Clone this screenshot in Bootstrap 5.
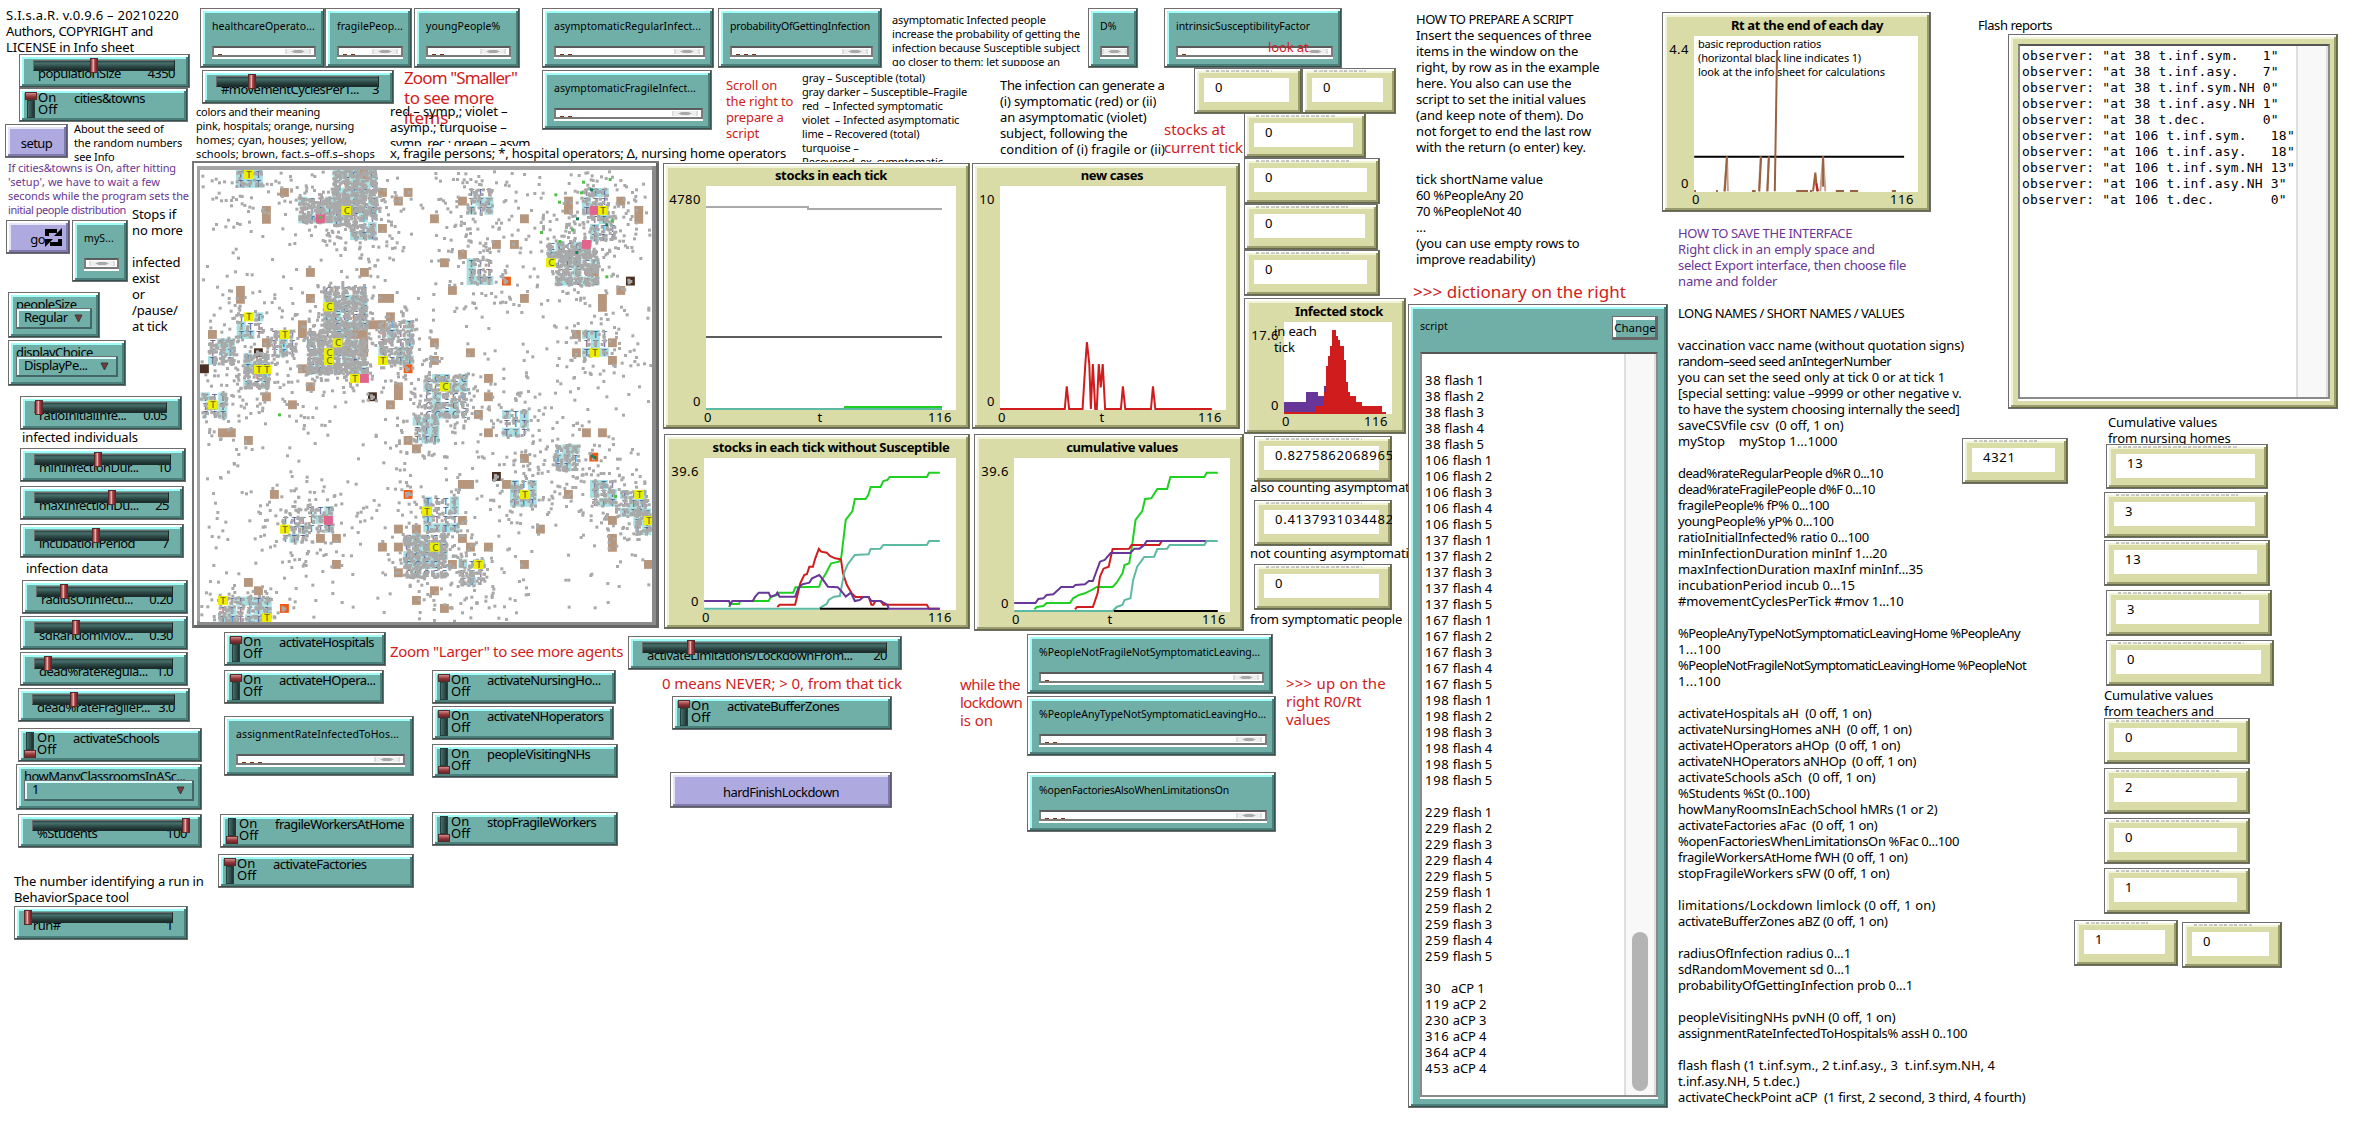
<!DOCTYPE html>
<html lang="en">
<head>
<meta charset="utf-8">
<title>S.I.s.a.R. model interface</title>
<link rel="stylesheet" href="https://cdn.jsdelivr.net/npm/bootstrap@5.3.0/dist/css/bootstrap.min.css">
<style>
  :root { --edge:#6e6e6e; --hi:#9ffcf8; --face:#70afa8; --mid:#4b7f7a; --low:#34524f; }
  body { font-family:"Noto Sans","Liberation Sans",sans-serif; color:#000; background:#fff; }
  #board { width:2354px; height:1122px; }
  .note { white-space:pre; }
  .ink-red { color:#d01c1c; } .ink-violet { color:#6a3695; }
  .f11 { font-size:11px; line-height:14px; letter-spacing:var(--ls11); }
  .f13 { font-size:13px; line-height:16px; letter-spacing:var(--ls13); }
  .f14 { font-size:15px; line-height:18px; letter-spacing:var(--ls14); }
  .f16 { font-size:17px; line-height:20px; letter-spacing:var(--ls16); }
  .wdg { background:var(--face); white-space:nowrap; overflow:hidden;
    box-shadow: inset 1px 1px var(--edge), inset -1px -1px var(--edge), inset -2px -2px var(--low), inset 3px 3px #fff, inset -4px -4px var(--mid), inset 5px 5px var(--hi); }
  .khaki { --face:#d9dca6; --hi:#f1f3d6; --mid:#9a9c70; --low:#66683f; }
  .lilac { --face:#aeaae0; --hi:#e6e4fb; --mid:#7f7ba8; --low:#5a5778; }
  .cap { font-size:13px; line-height:16px; letter-spacing:var(--lsw); }
  .num { letter-spacing:.75px; }
  /* slider */
  .groove { height:11px; margin:6px 15px 0 14px; z-index:1;
    background:linear-gradient(#2b4442,#46706c 25%,#2d4a47 60%,#1a2b2a); border:1px solid; border-color:#6c6c6c #1b2b2a #1b2b2a #6c6c6c; }
  .thumb { width:8px; height:15px; top:-3px; background:linear-gradient(90deg,#8f3437,#f3b5b5 45%,#a8454a 60%,#6d2326); border:1px solid #5a2a2b; }
  .slide-row { margin:-6px 15px 0 19px; }
  /* switch */
  .stem { width:8px; height:18px; background:linear-gradient(90deg,#46706c,#1d3130); border:1px solid #24403d; margin-left:2px; }
  .knob { width:12px; height:8px; background:linear-gradient(#d48b8b,#96393d 55%,#6b2528); border:1px solid #5b2c2d; flex:none; }
  .lever { width:12px; margin:4px 1px 0 6px; }
  .onoff { line-height:12px; margin-top:3px; width:36px; font-size:13px; }
  .sw-name { padding-top:2px; }
  /* input */
  .in-cap { font-size:10.5px; line-height:14px; letter-spacing:var(--ls10); margin:11px 8px 0 12px; }
  .in-box { height:11px; margin:13px 9px 0 12px; background:#fff; border:2px solid #7b7b7b; border-top-color:#5b5b5b; box-shadow:0 2px #fff; }
  .tickmark { width:4px; height:1px; background:#7d3413; margin-left:4px; }
  .pill { width:26px; height:5px; background:radial-gradient(ellipse at center,#a9a9a9 35%,#eee 45%); border:solid #ddd; border-width:0 2px; margin-right:3px; align-self:center; }
  /* monitor */
  .mon-cap { height:2px; margin:2px 30px 0 12px; background:repeating-linear-gradient(90deg,#aaa 0 3px,transparent 3px 5px,#bbb 5px 9px,transparent 9px 10px); opacity:.7; }
  .mon-box { height:24px; margin:6px 13px 0 10px; background:#fff; padding:1px 0 0 11px; }
  /* chooser */
  .drop { height:21px; margin:-4px 8px 0 8px; padding:0 9px 0 8px; background:var(--face);
    box-shadow: inset 1px 1px var(--edge), inset -2px -2px #466, inset 3px 3px #d9fbf9; z-index:1; }
  .drop .cap { line-height:17px; padding-bottom:3px; }
  .well { background:#fff; border:2px solid #8a8a8a; border-top-color:#555; box-shadow:0 2px #fff; }
  .rail { width:32px; background:#f8f8f8; border:solid #dedede; border-width:0 2px; }
  .grip { width:16px; height:159px; background:#b4b4b4; border-radius:8px; }
  .win-cap { margin-top:15px; }
  .script-well { margin:12px 10px 0 12px; height:745px; }
  .script-text { padding:18px 0 0 3px; }
  .log-well { margin:10px 8px 0 10px; height:355px; }
  .log-text { padding:2px 0 0 2px; }
  .chg { width:46px; height:24px; font-size:11.5px; line-height:24px; margin:12px 10px 0 0; background:var(--face);
    box-shadow: inset 1px 1px var(--edge), inset -3px -3px #666, inset 4px 4px #fff; }
  .logfont { font-family:"DejaVu Sans Mono","Liberation Mono",monospace; font-size:13px; line-height:16px; letter-spacing:.2px; white-space:pre; }
  .frame { background:#a4a4a4; box-shadow: inset 2px 2px #777, inset -3px -3px #666, inset 5px 5px #fff, inset -7px -7px #8b8b8b; }
  svg text { font-size:13px; letter-spacing:.5px; }
  svg .ttl { font-size:13px; font-weight:700; letter-spacing:var(--lsb); text-anchor:middle; }
  svg .tile-l { font-size:29px; fill:#4a6190; letter-spacing:0; font-weight:500; }
  svg polyline { fill:none; stroke-width:2px; vector-effect:non-scaling-stroke; }
</style>
</head>
<body>
<main id="board" class="position-relative overflow-hidden"></main>
<script src="https://cdn.jsdelivr.net/npm/bootstrap@5.3.0/dist/js/bootstrap.bundle.min.js"></script>
<script>
const board = document.getElementById('board');
const esc = s => String(s).replace(/&/g,'&amp;').replace(/</g,'&lt;').replace(/>/g,'&gt;');

/* tracking of each text size, from the width one known phrase should take */
const pen = document.createElement('canvas').getContext('2d');
function spacing(font, phrase, width) {
  pen.font = font + ' "Noto Sans"';
  return ((width - pen.measureText(phrase).width) / phrase.length).toFixed(3) + 'px';
}
const track = (name, font, phrase, width) => document.documentElement.style.setProperty(name, spacing(font, phrase, width));
track('--ls11', '11px', 'infection because Susceptible subject', 188);
track('--ls13', '13px', 'right, by row as in the example', 183.5);
track('--ls14', '15px', '0 means NEVER; > 0, from that tick', 240);
track('--ls16', '17px', '>>> dictionary on the right', 213);
track('--lsw', '13px', 'activateHospitals', 95);
track('--ls10', '10.5px', 'asymptomaticRegularInfect...', 147);
track('--lsb', '700 13px', 'stocks in each tick without Susceptible', 237);

/* every widget is placed on the board by x1, y1, x2, y2 */
function put(cls, x1, y1, x2, y2, html) {
  board.insertAdjacentHTML('beforeend',
    `<div class="position-absolute ${cls}" style="left:${x1}px;top:${y1}px;width:${x2-x1}px;height:${y2-y1}px">${html}</div>`);
}
const rise = {11:11, 13:13, 14:14, 16:16}, pitch = {11:14, 13:16, 14:18, 16:20}, px = {11:11, 13:13, 14:15, 16:17};
/* fits: {line number: width} for lines with a tracking of their own */
function note(x, base, size, text, ink = '', clipX, clipY, fits = {}) {
  const top = base - rise[size], rows = text.split('\n');
  const html = rows.map((r,i) => fits[i] ? `<span style="letter-spacing:${spacing(px[size]+'px', r, fits[i])}">${esc(r)}</span>` : esc(r)).join('\n');
  put(`note f${size} ${ink} ${clipX || clipY ? 'overflow-hidden' : ''}`, x, top, clipX || x + 500, clipY || top + rows.length * pitch[size], html);
}
const slider = (x1,y1,x2,y2,name,val,knob) => put('wdg', x1,y1,x2,y2,
  `<div class="groove position-relative"><div class="thumb position-absolute" style="left:${knob-x1-15}px"></div></div>
   <div class="slide-row cap d-flex justify-content-between"><span>${name}</span><span>${val}</span></div>`);
const toggle = (x1,y1,x2,y2,name,on) => put('wdg d-flex align-items-start', x1,y1,x2,y2,
  `<div class="lever d-flex flex-column">${on ? '<div class="knob"></div><div class="stem"></div>' : '<div class="stem"></div><div class="knob"></div>'}</div>
   <div class="onoff">On<br>Off</div><div class="cap sw-name">${name}</div>`);
const input = (x1,y1,x2,y2,name,n,fit) => put('wdg', x1,y1,x2,y2,
  `<div class="in-cap"${fit ? ` style="letter-spacing:${spacing('10.5px', name, fit)}"` : ''}>${name}</div><div class="in-box d-flex align-items-end">${'<i class="tickmark"></i>'.repeat(n)}<i class="pill ${x2-x1<60?'m-auto':'ms-auto'}"></i></div>`);
const monitor = (x1,y1,x2,y2,val) => put('wdg khaki', x1,y1,x2,y2,
  `<div class="mon-cap"></div><div class="mon-box cap num">${val}</div>`);
const chooser = (x1,y1,x2,y2,name,val) => put('wdg', x1,y1,x2,y2,
  `<div class="cap ps-2 pt-1">${name}</div><div class="drop position-relative d-flex justify-content-between align-items-center"><span class="cap">${val}</span>
   <svg width="9" height="9" viewBox="0 0 9 9"><path d="M1 1H8L4.5 8Z" fill="#7d3a3c" stroke="#2f3b3a"/></svg></div>`);

/* left column */
note(6,19.5,13,'S.I.s.a.R. v.0.9.6 – 20210220\nAuthors, COPYRIGHT and\nLICENSE in Info sheet','',0,0,{0:173,1:147});
slider(19,54,190,88,'populationSize','4350',90);
toggle(19,88,188,122,'cities&amp;towns',1);
put('wdg lilac cap d-flex align-items-center justify-content-center pt-1',5,124,68,158,'setup');
note(74,133,11,'About the seed of\nthe random numbers\nsee Info');
note(8,172,11,"If cities&towns is On, after hitting\n'setup', we have to wait a few\nseconds while the program sets the\ninitial people distribution",'ink-violet',0,0,{0:168,1:152,2:181,3:118});
put('wdg lilac cap d-flex align-items-center justify-content-end',6,220,70,254,
  `<span class="pt-1">go</span><svg class="me-2" width="17" height="19" viewBox="0 0 17 19"><g fill="none" stroke="#000" stroke-width="4"><path d="M2 8V3H12"/><path d="M15 11V16H5"/></g><path d="M9 8H17V0ZM8 11H0V19Z"/></svg>`);
put('wdg',72,220,128,282,'<div class="in-cap">myS...</div><div class="in-box d-flex"><i class="pill m-auto"></i></div>');
note(132,219,13,'Stops if\nno more\n\ninfected\nexist\nor\n/pause/\nat tick');
note(150,347,13,'⌢','',158,341);
chooser(8,292,100,338,'peopleSize','Regular');
chooser(8,340,126,386,'displayChoice','DisplayPe...');
slider(20,396,182,430,'ratioInitialInfe...','0.05',35);
note(22,441.5,13,'infected individuals');
slider(20,448,186,482,'minInfectionDur...','10',94);
slider(20,486,184,520,'maxInfectionDu...','25',108);
slider(20,524,184,558,'incubationPeriod','7',92);
note(26,573,13,'infection data');
slider(22,580,188,614,'radiusOfInfecti...','0.20',60);
slider(20,616,188,650,'sdRandomMov...','0.30',72);
slider(20,652,188,686,'dead%rateRegula...','1.0',44);
slider(18,688,190,722,'dead%rateFragileP...','3.0',70);
toggle(18,728,202,762,'activateSchools',0);
chooser(16,764,202,810,'howManyClassroomsInASc...','1');
slider(18,814,202,848,'%Students','100',182);
note(14,886,13,'The number identifying a run in\nBehaviorSpace tool');
slider(14,906,188,940,'run#','1',24);

/* upper inputs and notes */
input(200,8,325,68,'healthcareOperato...',1);
input(325,8,412,68,'fragilePeop...',2);
input(414,8,520,68,'youngPeople%',2);
slider(202,70,394,104,'#movementCyclesPerT...','3',248);
note(404,84,16,'Zoom "Smaller"\nto see more\nitems','ink-red',0,0,{0:113,1:90});
note(196,116,11,'colors and their meaning\npink, hospitals; orange, nursing\nhomes; cyan, houses; yellow,\nschools; brown, fact.s–off.s–shops','',0,0,{0:124,1:158,2:151,3:179});
note(390,116,13,'red – symp,; violet –\nasymp.; turquoise –\nsymp. rec.; green – asym.','',536,146,{2:143});
note(390,158,13,'x, fragile persons; *, hospital operators; ∆, nursing home operators','',0,0,{0:396});
input(542,8,714,68,'asymptomaticRegularInfect...',2);
input(718,8,882,68,'probabilityOfGettingInfection',3,140);
input(542,70,712,130,'asymptomaticFragileInfect...',2);
note(892,24,11,'asymptomatic Infected people\nincrease the probability of getting the\ninfection because Susceptible subject\ngo closer to them: let suppose an','',1086,66,{1:188});
note(726,90,13,'Scroll on\nthe right to\nprepare a\nscript','ink-red');
note(802,82,11,'gray – Susceptible (total)\ngray darker – Susceptible–Fragile\nred  – Infected symptomatic\nviolet  – Infected asymptomatic\nlime – Recovered (total)\nturquoise –\nRecovered–ex–symptomatic','',990,162,{1:165});
note(1000,90,13,'The infection can generate a\n(i) symptomatic (red) or (ii)\nan asymptomatic (violet)\nsubject, following the\ncondition of (i) fragile or (ii)','',0,0,{0:164.5,4:165});
input(1088,8,1138,68,'D%',0);
input(1164,8,1342,68,'intrinsicSusceptibilityFactor',1,134);
note(1268,52,13,'look at','ink-red');
monitor(1194,68,1302,114,0); monitor(1302,68,1396,114,0);
monitor(1244,113,1366,158,0); monitor(1244,158,1380,204,0);
monitor(1244,204,1378,250,0); monitor(1244,250,1380,296,0);
note(1164,134,14,'stocks at\ncurrent tick','ink-red',0,0,{1:79});
note(1416,24,13,'HOW TO PREPARE A SCRIPT\nInsert the sequences of three\nitems in the window on the\nright, by row as in the example\nhere. You also can use the\nscript to set the initial values\n(and keep note of them). Do\nnot forget to end the last row\nwith the return (o enter) key.\n\ntick shortName value\n60 %PeopleAny 20\n70 %PeopleNot 40\n...\n(you can use empty rows to\nimprove readability)','',0,0,{0:157,11:107,12:105});
note(1413,298,16,'>>> dictionary on the right','ink-red');

/* lower centre */
toggle(224,632,386,666,'activateHospitals',1);
toggle(224,670,384,704,'activateHOpera...',1);
input(224,716,414,776,'assignmentRateInfectedToHos...',3,163);
toggle(220,814,414,848,'fragileWorkersAtHome',0);
toggle(218,854,414,888,'activateFactories',1);
toggle(432,670,616,704,'activateNursingHo...',1);
toggle(432,706,614,740,'activateNHoperators',1);
toggle(432,744,618,778,'peopleVisitingNHs',0);
toggle(432,812,618,846,'stopFragileWorkers',0);
note(390,656,14,'Zoom "Larger" to see more agents','ink-red',0,0,{0:233});
slider(628,636,902,670,'activateLimitations/LockdownFrom...','20',687);
note(662,688,14,'0 means NEVER; > 0, from that tick','ink-red');
toggle(672,696,892,730,'activateBufferZones',1);
put('wdg lilac cap d-flex align-items-center justify-content-center pt-1',670,772,892,808,'hardFinishLockdown');
note(960,689,14,'while the\nlockdown\nis on','ink-red',0,0,{0:60,1:62});
input(1027,634,1273,694,'%PeopleNotFragileNotSymptomaticLeaving...',1,221);
input(1027,696,1276,756,'%PeopleAnyTypeNotSymptomaticLeavingHo...',2,227);
input(1027,772,1276,832,'%openFactoriesAlsoWhenLimitationsOn',3,190);
note(1286,688,14,'>>> up on the\nright R0/Rt\nvalues','ink-red',0,0,{0:100});
monitor(1254,436,1392,482,'0.82758620689655');
note(1250,492,13,'also counting asymptomatic','',1408,500);
monitor(1254,500,1392,546,'0.41379310344827');
note(1250,558,13,'not counting asymptomatic','',1408,564);
monitor(1254,564,1392,610,0);
note(1250,624,13,'from symptomatic people','',0,0,{0:152});

/* plots: window box, plotting area, labels [x,y,text,anchor], curves */
function plot(x1,y1,x2,y2, area, title, labels, inner) {
  put('wdg khaki',x1,y1,x2,y2,
   `<svg class="d-block" width="${x2-x1}" height="${y2-y1}" viewBox="${x1} ${y1} ${x2-x1} ${y2-y1}">
     <text class="ttl" x="${title[0]}" y="${title[1]}">${title[2]}</text>
     <rect x="${area[0]}" y="${area[1]}" width="${area[2]-area[0]}" height="${area[3]-area[1]}" fill="#fff"/>
     ${inner}${labels.map(l=>`<text x="${l[0]}" y="${l[1]}" text-anchor="${l[3]||'middle'}">${l[2]}</text>`).join('')}</svg>`);
}
const line = (c, pts) => `<polyline stroke="${c}" points="${pts}"/>`;
const G='#1fd022', R='#d01c1c', V='#683698', A='#5dbaa2';
const mid = s => `<g transform="translate(650 150) scale(.3954 .33333)">${s}</g>`;
plot(663,163,970,429,[706,186,956,410],[831,180,'stocks in each tick'],
 [[701,204,'4780','end'],[701,406,'0','end'],[708,422,'0'],[820,422,'t'],[940,422,'116']],
 line('#aaa','706,207 808,207 808,209 942,209')+line('#5c5c5c','706,337 942,337')+line(A,'706,409 942,409')+line(G,'844,407 942,407'));
plot(972,163,1240,429,[1000,186,1226,410],[1112,180,'new cases'],
 [[995,204,'10','end'],[995,406,'0','end'],[1002,422,'0'],[1102,422,'t'],[1210,422,'116']],
 mid(line(R,'885,777 1049,777 1054,709 1060,777 1094,777 1101,642 1105,576 1111,642 1115,777 1120,642 1126,777 1130,777 1135,642 1140,712 1145,642 1151,777 1191,777 1196,709 1202,777 1267,777 1272,709 1278,777 1421,777')));
plot(664,434,970,629,[704,458,956,610],[831,452,'stocks in each tick without Susceptible'],
 [[699,476,'39.6','end'],[699,606,'0','end'],[706,622,'0'],[940,622,'116']],
 mid(line(G,'200,1371 203,1362 225,1362 228,1353 300,1353 305,1341 322,1335 326,1328 362,1328 368,1312 428,1310 432,1295 445,1270 458,1240 478,1235 484,1220 495,1110 512,1083 518,1047 545,1047 552,1035 558,1011 583,1011 590,993 600,990 606,981 700,981 706,968 733,968')
 +line(R,'322,1371 328,1364 367,1364 372,1340 380,1300 390,1275 397,1272 403,1250 412,1250 418,1225 427,1197 433,1205 447,1208 455,1218 468,1225 483,1228 488,1270 498,1305 510,1330 520,1341 553,1341 560,1364 565,1364 570,1353 583,1353 590,1364 700,1364 706,1376 733,1376')
 +line(A,'137,1376 428,1376 435,1370 447,1362 452,1350 465,1340 480,1338 486,1300 492,1265 500,1243 518,1215 553,1213 558,1197 583,1196 590,1185 700,1185 706,1173 733,1173')
 +line('#000','430,1376 604,1376')
 +line(V,'137,1353 200,1353 203,1364 208,1353 260,1353 266,1340 275,1328 300,1328 305,1340 318,1335 322,1328 328,1340 367,1340 375,1315 385,1303 403,1298 410,1285 428,1275 435,1285 450,1310 475,1312 485,1325 495,1340 508,1328 518,1353 530,1350 540,1341 553,1341 560,1353 583,1353 600,1364 604,1376 733,1376')));
plot(974,434,1244,631,[1014,458,1230,612],[1122,452,'cumulative values'],
 [[1009,476,'39.6','end'],[1009,608,'0','end'],[1016,624,'0'],[1110,624,'t'],[1214,624,'116']],
 mid(line(G,'972,1378 978,1371 995,1368 1003,1359 1062,1359 1070,1345 1085,1335 1100,1330 1120,1318 1130,1311 1170,1311 1180,1298 1195,1270 1200,1245 1212,1240 1220,1180 1228,1110 1245,1083 1252,1047 1268,1045 1283,1017 1308,1017 1316,981 1402,981 1408,968 1436,968')
 +line(R,'1075,1378 1080,1371 1120,1371 1132,1330 1138,1280 1147,1256 1160,1250 1170,1197 1212,1196 1218,1185 1288,1185 1295,1173 1405,1173')
 +line(A,'921,1383 1170,1383 1180,1371 1195,1365 1200,1350 1215,1345 1222,1290 1232,1250 1250,1221 1275,1220 1283,1197 1308,1196 1314,1185 1402,1185 1408,1173 1436,1173')
 +line('#000','1173,1383 1436,1383')
 +line(V,'921,1359 975,1359 982,1347 995,1345 1003,1335 1020,1333 1040,1311 1070,1311 1076,1305 1100,1303 1110,1293 1120,1293 1138,1235 1150,1230 1165,1209 1215,1209 1225,1196 1238,1196 1250,1185 1256,1173 1405,1173')));
plot(1244,298,1406,434,[1284,322,1392,414],[1339,316,'Infected stock'],
 [[1279,340,'17.6','end'],[1279,410,'0','end'],[1286,426,'0'],[1376,426,'116']],
 `<g transform="translate(1230 270) scale(.33333)"><path fill="${V}" d="M162 432V396H228V366H264V378H282V348H292V432Z"/><path fill="${R}" d="M162 432V426H258V408H282V366H288V288H294V258H300V228H306V180H318V198H324V210H330V228H342V270H348V336H354V366H360V378H378V396H396V408H456V426H468V432Z"/></g>`);
note(1274,336,13,'in each\ntick');
const B='#9a6240';
plot(1662,12,1931,212,[1694,36,1918,192],[1807,30,'Rt at the end of each day'],
 [[1689,54,'4.4','end'],[1689,188,'0','end'],[1696,204,'0'],[1902,204,'116']],'');
note(1698,48,11,'basic reproduction ratios\n(horizontal black line indicates 1)\nlook at the info sheet for calculations','',0,0,{0:123,1:163,2:187});
put('',1662,12,1931,212,`<svg class="d-block" width="269" height="200" viewBox="1662 12 269 200"><g transform="translate(1640 0) scale(.4554 .33333)">`
 +line('#000','119,470 580,470')
 +line('#c4a28e','185,574 191,470 193,574')+line('#c4a28e','261,574 265,470')+line('#c4a28e','279,574 283,470')+line('#c4a28e','396,574 402,470 407,574')
 +line(B,'191,470 186,574')+line(B,'266,470 262,574')+line(B,'283,470 280,574')+line(B,'296,574 301,150')+line(B,'402,470 402,560')
 +line(B,'380,574 385,518 389,574')+line(R,'387,550 391,574')
 +[[119,123],[167,171],[246,254],[343,369],[373,378],[430,448],[461,479],[553,562]].map(s=>line(B,`${s[0]},573 ${s[1]},573`)).join('')+'</g></svg>');

/* script input window */
const seq = (t,k=5) => Array.from({length:k},(_,i)=>`${t} flash ${Math.min(i+1,5)}`).join('\n');
put('wdg d-flex flex-column',1408,304,1668,1108,
 `<div class="d-flex justify-content-between"><span class="in-cap win-cap">script</span><span class="chg text-center">Change</span></div>
  <div class="well script-well d-flex justify-content-between overflow-hidden">
   <div class="note f13 script-text">${[seq(38),seq(106),seq(137),seq(167),seq(198,6),'',seq(229),seq(259),'','30   aCP 1','119 aCP 2','230 aCP 3','316 aCP 4','364 aCP 4','453 aCP 4'].join('\n').replace(/(\d\d\d?)( flash| aCP|   aCP)/g,'<span class="num">$1</span>$2')}</div>
   <div class="rail d-flex align-items-end justify-content-center pb-1"><div class="grip"></div></div></div>`);

/* right side */
note(1678,238,13,'HOW TO SAVE THE INTERFACE\nRight click in an emply space and\nselect Export interface, then choose file\nname and folder','ink-violet',0,0,{0:174,2:228});
note(1678,318,13,`LONG NAMES / SHORT NAMES / VALUES

vaccination vacc name (without quotation signs)
random–seed seed anIntegerNumber
you can set the seed only at tick 0 or at tick 1
[special setting: value –9999 or other negative v.
to have the system choosing internally the seed]
saveCSVfile csv  (0 off, 1 on)
myStop    myStop 1...1000

dead%rateRegularPeople d%R 0...10
dead%rateFragilePeople d%F 0...10
fragilePeople% fP% 0...100
youngPeople% yP% 0...100
ratioInitialInfected% ratio 0...100
minInfectionDuration minInf 1...20
maxInfectionDuration maxInf minInf...35
incubationPeriod incub 0...15
#movementCyclesPerTick #mov 1...10

%PeopleAnyTypeNotSymptomaticLeavingHome %PeopleAny
1...100
%PeopleNotFragileNotSymptomaticLeavingHome %PeopleNot
1...100

activateHospitals aH  (0 off, 1 on)
activateNursingHomes aNH  (0 off, 1 on)
activateHOperators aHOp  (0 off, 1 on)
activateNHOperators aNHOp  (0 off, 1 on)
activateSchools aSch  (0 off, 1 on)
%Students %St (0..100)
howManyRoomsInEachSchool hMRs (1 or 2)
activateFactories aFac  (0 off, 1 on)
%openFactoriesWhenLimitationsOn %Fac 0...100
fragileWorkersAtHome fWH (0 off, 1 on)
stopFragileWorkers sFW (0 off, 1 on)

limitations/Lockdown limlock (0 off, 1 on)
activateBufferZones aBZ (0 off, 1 on)

radiusOfInfection radius 0...1
sdRandomMovement sd 0...1
probabilityOfGettingInfection prob 0...1

peopleVisitingNHs pvNH (0 off, 1 on)
assignmentRateInfectedToHospitals% assH 0..100

flash flash (1 t.inf.sym., 2 t.inf.asy., 3  t.inf.sym.NH, 4
t.inf.asy.NH, 5 t.dec.)
activateCheckPoint aCP  (1 first, 2 second, 3 third, 4 fourth)`,'',0,0,
 {0:226,2:286,3:213,4:267,5:283.5,6:281.5,7:165.5,8:159.5,10:205,11:197,12:151,13:155.5,14:191,15:209,16:245,17:177,18:225.5,
  20:342,21:43,22:348,23:43,25:193.5,26:233.6,27:222,28:238,29:197.5,30:131.5,31:259.5,32:199.5,33:281,34:229.5,35:211.5,
  37:257.5,38:209.5,40:173,41:173,42:235,44:217.5,45:289,47:317,48:121.5,49:347.5});
note(1978,30,13,'Flash reports','',0,0,{0:74});
put('wdg khaki',2008,34,2338,409,
 `<div class="well log-well d-flex justify-content-between overflow-hidden">
   <div class="logfont log-text">observer: "at 38 t.inf.sym.   1"
observer: "at 38 t.inf.asy.   7"
observer: "at 38 t.inf.sym.NH 0"
observer: "at 38 t.inf.asy.NH 1"
observer: "at 38 t.dec.       0"
observer: "at 106 t.inf.sym.   18"
observer: "at 106 t.inf.asy.   18"
observer: "at 106 t.inf.sym.NH 13"
observer: "at 106 t.inf.asy.NH 3"
observer: "at 106 t.dec.       0"</div><div class="rail flex-shrink-0"></div></div>`);
monitor(1962,438,2068,484,4321);
note(2108,427,13,'Cumulative values\nfrom nursing homes','',2300,444);
monitor(2106,444,2268,489,13); monitor(2104,492,2268,538,3); monitor(2104,540,2270,586,13);
monitor(2106,590,2272,636,3); monitor(2106,640,2274,686,0);
note(2104,700,13,'Cumulative values\nfrom teachers and');
monitor(2104,718,2250,764,0); monitor(2104,768,2250,814,2); monitor(2104,818,2250,864,0);
monitor(2104,868,2250,914,1); monitor(2074,920,2178,966,1); monitor(2182,922,2282,968,0);

/* world view: 51 x 51 patches; towns are [x, y, w, h, crowd, letter] */
let seed = 4321;
const rnd = () => (seed = (seed * 16807) % 2147483647) / 2147483647;
const P = 26.6, T = [
 [138,60,78,54,3,'T'],[428,60,138,135,8,'C'],[325,140,105,80,8,'T'],[480,190,85,70,5,'T'],[430,150,60,70,8,'C'],[830,114,76,80,4,'T'],[1176,114,78,80,4,'T'],
 [1200,195,78,75,4,'T'],[1095,300,130,105,8,'C'],[1070,275,120,60,6,'C'],[830,325,76,82,3,'T'],[400,408,138,140,8,'C'],[140,487,78,75,2,'T'],
 [240,540,84,77,4,'T'],[350,540,130,130,10,'C'],[480,570,54,110,8,'T'],[54,565,84,77,5,'T'],[160,610,85,115,7,'T'],[32,727,76,77,3,'T'],
 [565,510,100,135,5,'T'],[700,672,130,130,4,'C'],[668,800,85,80,3,'T'],[936,780,78,78,2,'T'],[1090,883,85,82,5,'T'],[1176,540,78,77,2,'T'],
 [960,990,80,77,3,'T'],[1200,990,78,77,4,'T'],[1290,1020,75,75,4,'T'],[1330,1075,56,75,6,'T'],[700,1040,100,105,2,'T'],[640,1150,135,135,7,'C'],
 [805,1228,78,80,5,'T'],[272,1098,75,77,3,'T'],[350,1068,75,80,3,'T'],[85,1340,155,76,4,'T']];
let w = '', dots = '';
const dot = (x,y,c='#a9a9a9') => dots += `<rect x="${x.toFixed(0)}" y="${y.toFixed(0)}" width="9" height="9" fill="${c}"/>`;
for (const [x,y,tw,th,n,l] of T) for (let i=0;i<Math.round(tw/P);i++) for (let j=0;j<Math.round(th/P);j++) {
  const a=x+i*P, b=y+j*P;
  if (rnd()<.6) w += `<rect x="${a.toFixed(1)}" y="${b.toFixed(1)}" width="27" height="27" fill="#a9dfe0"/>`;
  w += `<text class="tile-l" x="${(a+6).toFixed(0)}" y="${(b+25).toFixed(0)}">${l}</text>`;
  for (let k=0;k<n*1.5;k++) dot(a+rnd()*24-2,b+rnd()*24-2);
}
for (let k=0;k<620;k++) dot(30+rnd()*1350,60+rnd()*1350);
for (let k=0;k<1500;k++) { const t=T[Math.floor(rnd()*T.length)], a=rnd()*6.283, r=40+110*Math.sqrt(rnd())*rnd()+30*rnd();
  const dx=t[0]+t[2]/2+Math.cos(a)*r*1.1, dy=t[1]+t[3]/2+Math.sin(a)*r; if(dx>30&&dx<1378&&dy>60&&dy<1408) dot(dx,dy); }
const tiles = (c, list) => list.map(([x,y,cw=1,ch=1]) => `<rect x="${x}" y="${y}" width="${cw*P}" height="${ch*P}" fill="${c}"/>`).join('');
w += tiles('#b6967c', [[270,114],[216,168,1,2],[508,60],[564,114],[641,114],[612,140],[564,222],[720,193],[804,140],[1122,140,1,2],[1279,140],[1333,168,1,2],
 [990,193],[906,270],[960,270],[804,300],[750,325],[1200,352],[1279,408],[1224,432,1,2],[990,432],[774,408],[348,354],[510,354],[138,408,1,2],[348,432],[564,432,1.8],
 [588,487],[324,511,1,2],[534,511,2],[480,540,2],[508,567,1,2],[54,540],[216,565],[324,643],[720,565],[828,595],[720,618],[348,697],[216,727],[294,751],[612,697,1,2],[588,751],
 [882,672],[882,727],[852,780],[882,835],[84,835,2],[162,858],[641,858],[666,883],[990,912],[936,990],[804,990,1.8],[1146,540],[1254,565],[1146,595],[1254,618],
 [1176,835],[1224,835],[1122,1020],[240,1020],[378,1152],[426,1152],[426,1230],[564,1178],[612,1124],[666,1124],[612,1178],[804,1098],[804,1152],[828,1178],[882,1178],
 [1038,1124],[1254,1098],[1254,1152,1,2],[990,1230],[1362,1230],[774,1230],[612,1255],[720,1309],[666,1338],[750,1362],[162,1284],[192,1309]]);
w += tiles('#4a2f22', [[192,595],[30,643],[534,727],[906,966],[1308,380]]) + tiles('#f05a14', [[936,380],[641,643],[641,1020],[270,1362],[1198,908]]);
const lit = [[162,60,'T'],[454,168,'C'],[1224,168,'T'],[1068,325,'C'],[402,457,'C'],[162,487,'T'],[270,540,'T'],[428,565,'C'],[402,595,'C'],[402,618,'C'],[192,645,'T'],[216,645,'T'],
 [54,751,'T'],[480,672,'T'],[564,618,'T'],[750,697,'C'],[1200,595,'T'],[990,1020,'T'],[1333,1020,'T'],[1362,1098,'T'],[696,1070,'T'],[720,1178,'C'],[852,1230,'T'],[270,1124,'T'],[84,1338,'T'],[216,1390,'T']];
const sick = tiles('#e0648c', [[378,193],[1200,168],[1176,270],[510,672],[402,1098]]);
const yel = lit.map(([x,y,l]) => `<rect x="${x}" y="${y}" width="29" height="27" fill="#eaf000"/><text class="tile-l" style="fill:#6b6f1c" x="${x+7}" y="${y+24}">${l}</text>`).join('');
const stray = dots; dots = '';
[[936,382],[641,645],[641,1022],[270,1364],[1308,382],[536,729],[908,968],[194,597]].forEach(([x,y])=>{dot(x+4,y+4);dot(x+10,y+8);dot(x+5,y+12);});
[[1093,130],[1104,152],[1170,124],[1256,84],[1176,92],[1050,243],[1143,235],[1105,270],[1246,376],[386,198],[1262,208],[264,790],[1272,1035]].forEach(([x,y])=>dot(x,y,'#4fc04a'));
[[1200,115],[1246,220],[1156,303],[1202,914],[1210,918],[1158,202]].forEach(([x,y])=>dot(x,y,'#1c7f5c'));
put('frame',192,161,659,628,'');
put('overflow-hidden bg-white',200,170,652,622,`<svg class="d-block" width="452" height="452" viewBox="30 60 1356 1356">${w}${stray}${sick}${yel}${dots}</svg>`);
</script>
</body>
</html>
